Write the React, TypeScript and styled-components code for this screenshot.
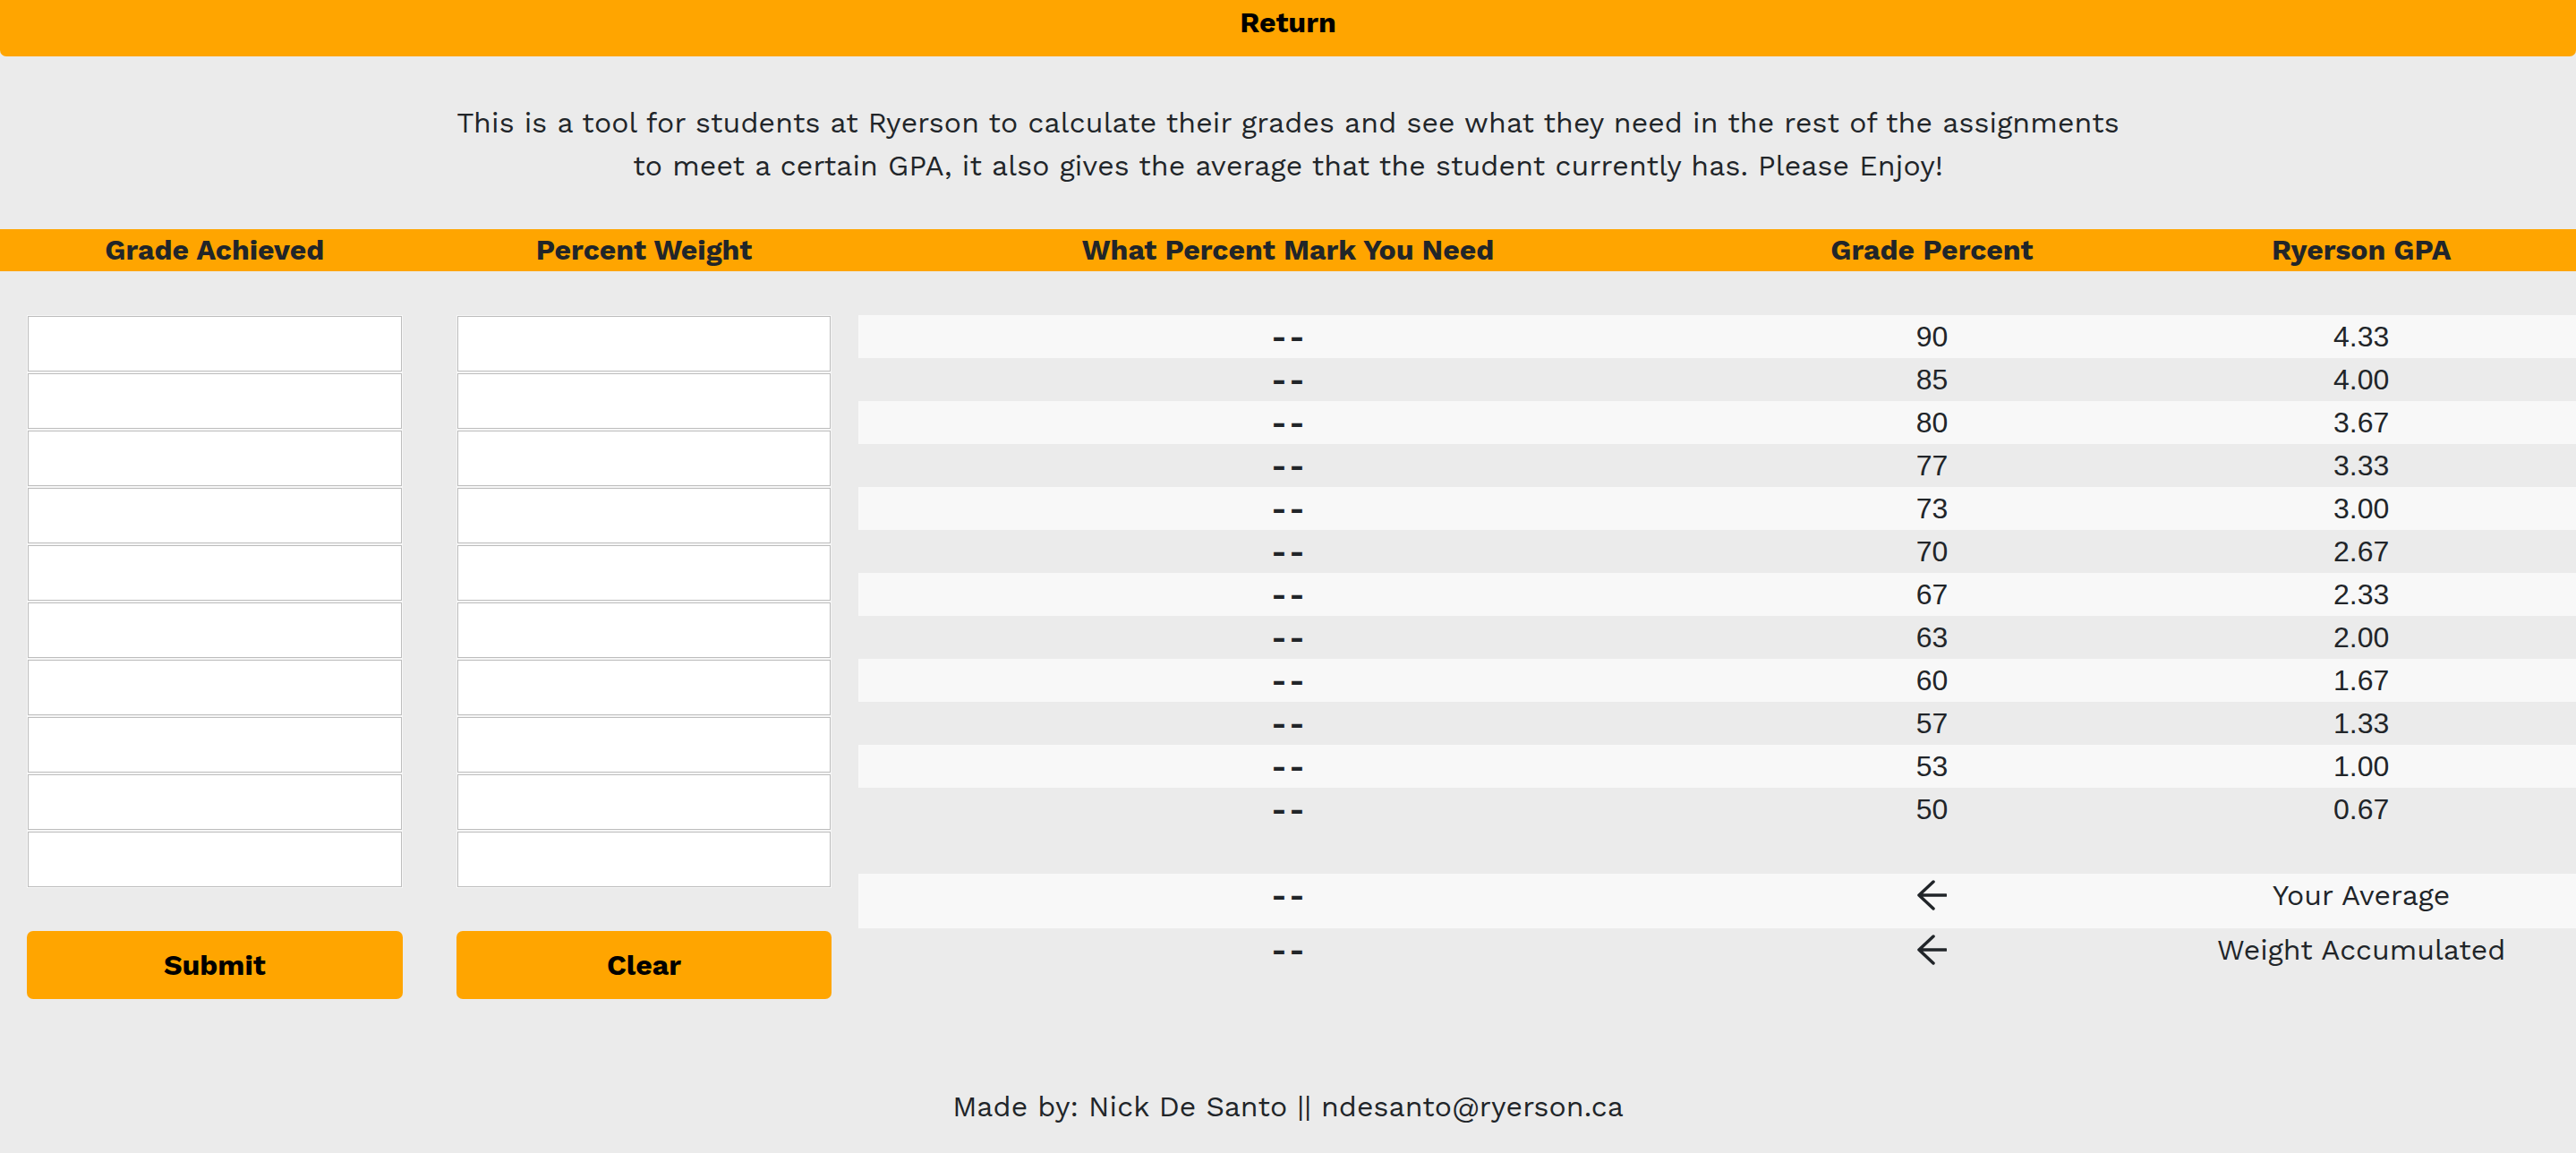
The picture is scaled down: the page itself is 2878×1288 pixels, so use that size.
import React from "react";
import styled, { createGlobalStyle } from "styled-components";

const ORANGE = "#ffa500";
const BG = "#ebebeb";
const STRIPE = "#f8f8f8";
const TEXT = "#212529";

const GlobalStyle = createGlobalStyle`
  html, body {
    margin: 0;
    padding: 0;
    background: ${BG};
  }
  body {
    font-family: "Work Sans", "Open Sans", "Liberation Sans", sans-serif;
    font-size: 32px;
    line-height: 48px;
    color: ${TEXT};
    overflow: hidden;
  }
  * { box-sizing: border-box; }
`;

const Page = styled.div`
  display: flex;
  flex-direction: column;
  min-height: 1288px;
  overflow: hidden;
`;

const ReturnButton = styled.button`
  display: block;
  width: 100%;
  height: 76px;
  margin-top: -13px;
  border: none;
  border-radius: 7px;
  background: ${ORANGE};
  color: #000;
  font-family: inherit;
  font-size: 32px;
  font-weight: 700;
  line-height: 48px;
  cursor: pointer;
`;

const Description = styled.p`
  margin: 50px 0 0;
  text-align: center;
  font-size: 32px;
  line-height: 48px;
  letter-spacing: 0.14px;
`;

const HeaderBar = styled.div`
  margin-top: 47px;
  height: 47px;
  background: ${ORANGE};
  display: grid;
  grid-template-columns: 1fr 1fr 2fr 1fr 1fr;
  align-items: center;
`;

const HeaderCell = styled.div`
  text-align: center;
  font-weight: 700;
  line-height: 47px;
  padding: 0 30px;
  white-space: nowrap;
`;

const Main = styled.div`
  margin-top: 49px;
  display: grid;
  grid-template-columns: 1fr 1fr 4fr;
  align-items: start;
`;

const InputColumn = styled.div`
  display: flex;
  flex-direction: column;
  padding: 0 30px;
`;

const GradeInput = styled.input`
  display: block;
  width: 100%;
  height: 64px;
  margin: 0;
  padding: 0 4px;
  background: #fff;
  border: 1px solid #f6f6f6;
  box-shadow: inset 0 0 0 1px #bdbdbd;
  font-family: inherit;
  font-size: 32px;
  outline: none;
`;

const ActionButton = styled.button`
  margin-top: 48px;
  height: 76px;
  width: 100%;
  border: none;
  border-radius: 7px;
  background: ${ORANGE};
  color: #000;
  font-family: inherit;
  font-size: 32px;
  font-weight: 700;
  line-height: 48px;
  cursor: pointer;
`;

const Table = styled.div`
  display: flex;
  flex-direction: column;
`;

const Row = styled.div<{ $striped?: boolean; $tall?: boolean }>`
  display: grid;
  grid-template-columns: 2fr 1fr 1fr;
  align-items: start;
  height: ${(p) => (p.$tall ? "61px" : "48px")};
  background: ${(p) => (p.$striped ? STRIPE : "transparent")};
`;

const Spacer = styled.div`
  height: 48px;
`;

const Cell = styled.div<{ $numeric?: boolean }>`
  height: 48px;
  display: flex;
  align-items: center;
  justify-content: center;
  font-family: ${(p) =>
    p.$numeric ? `"Liberation Sans", Arial, sans-serif` : "inherit"};
  white-space: nowrap;
`;

const Dash = styled.span`
  font-weight: 700;
  letter-spacing: 3px;
  margin-right: -3px;
`;

const Footer = styled.footer`
  margin-top: 96px;
  text-align: center;
  line-height: 48px;
  letter-spacing: 0.08px;
`;

const ArrowIcon = () => (
  <svg width="34" height="34" viewBox="0 0 34 34" fill="none">
    <path
      d="M19 2 L3 17 L19 32 M3 17 H33"
      stroke={TEXT}
      strokeWidth="3.5"
      strokeLinecap="round"
      strokeLinejoin="round"
    />
  </svg>
);

const scale: [string, string][] = [
  ["90", "4.33"],
  ["85", "4.00"],
  ["80", "3.67"],
  ["77", "3.33"],
  ["73", "3.00"],
  ["70", "2.67"],
  ["67", "2.33"],
  ["63", "2.00"],
  ["60", "1.67"],
  ["57", "1.33"],
  ["53", "1.00"],
  ["50", "0.67"],
];

const inputs = Array.from({ length: 10 }, (_, i) => i);

export default function App() {
  return (
    <Page>
      <GlobalStyle />
      <ReturnButton>Return</ReturnButton>
      <Description>
        This is a tool for students at Ryerson to calculate their grades and see
        what they need in the rest of the assignments
        <br />
        to meet a certain GPA, it also gives the average that the student
        currently has. Please Enjoy!
      </Description>
      <HeaderBar>
        <HeaderCell>Grade Achieved</HeaderCell>
        <HeaderCell>Percent Weight</HeaderCell>
        <HeaderCell>What Percent Mark You Need</HeaderCell>
        <HeaderCell>Grade Percent</HeaderCell>
        <HeaderCell>Ryerson GPA</HeaderCell>
      </HeaderBar>
      <Main>
        <InputColumn>
          {inputs.map((i) => (
            <GradeInput key={i} type="text" aria-label={`Grade ${i + 1}`} />
          ))}
          <ActionButton>Submit</ActionButton>
        </InputColumn>
        <InputColumn>
          {inputs.map((i) => (
            <GradeInput key={i} type="text" aria-label={`Weight ${i + 1}`} />
          ))}
          <ActionButton>Clear</ActionButton>
        </InputColumn>
        <Table>
          {scale.map(([pct, gpa], i) => (
            <Row key={pct} $striped={i % 2 === 0}>
              <Cell>
                <Dash>--</Dash>
              </Cell>
              <Cell $numeric>{pct}</Cell>
              <Cell $numeric>{gpa}</Cell>
            </Row>
          ))}
          <Spacer />
          <Row $striped $tall>
            <Cell>
              <Dash>--</Dash>
            </Cell>
            <Cell>
              <ArrowIcon />
            </Cell>
            <Cell>Your Average</Cell>
          </Row>
          <Row $tall>
            <Cell>
              <Dash>--</Dash>
            </Cell>
            <Cell>
              <ArrowIcon />
            </Cell>
            <Cell>Weight Accumulated</Cell>
          </Row>
        </Table>
      </Main>
      <Footer>Made by: Nick De Santo || ndesanto@ryerson.ca</Footer>
    </Page>
  );
}
